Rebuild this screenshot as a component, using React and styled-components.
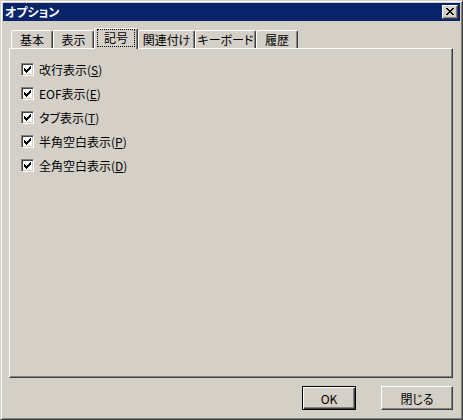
import React from "react";
import styled, { createGlobalStyle } from "styled-components";

const Global = createGlobalStyle`
  html, body { margin: 0; padding: 0; background: #d4d0c8; }
  body {
    font-family: "Noto Sans CJK JP", "Noto Sans", sans-serif;
    font-size: 12px;
    font-feature-settings: "palt";
    color: #000;
  }
  * { box-sizing: border-box; }
`;

const Window = styled.div`
  width: 463px;
  height: 420px;
  display: flex;
  flex-direction: column;
  background: #d4d0c8;
  border: 1px solid;
  border-color: #d4d0c8 #404040 #404040 #d4d0c8;
  box-shadow: inset 1px 1px #fff, inset -1px -1px #808080;
  padding: 2px;
`;

const TitleBar = styled.div`
  height: 18px;
  flex: none;
  display: flex;
  align-items: center;
  justify-content: space-between;
  background: #0a246a;
  color: #fff;
  font-weight: bold;
  font-size: 12px;
  padding: 0 2px 0 2px;
`;

const TitleText = styled.span`
  line-height: 18px;
`;

const CloseButton = styled.div`
  width: 16px;
  height: 14px;
  display: flex;
  align-items: center;
  justify-content: center;
  background: #d4d0c8;
  border: 1px solid;
  border-color: #fff #404040 #404040 #fff;
  box-shadow: inset -1px -1px #808080;
  padding: 0 1px 1px 0;
  svg { display: block; }
`;

const Body = styled.div`
  flex: 1;
  display: flex;
  flex-direction: column;
  padding: 7px 7px 0 6px;
`;

const TabStrip = styled.div`
  height: 20px;
  flex: none;
  display: flex;
  align-items: flex-end;
  padding-left: 2px;
`;

const Tab = styled.div`
  width: ${(p) => p.$w}px;
  height: ${(p) => (p.$active ? 21 : 18)}px;
  margin-bottom: ${(p) => (p.$active ? -1 : 0)}px;
  position: relative;
  z-index: ${(p) => (p.$active ? 1 : 0)};
  display: flex;
  align-items: stretch;
  justify-content: center;
  background: #d4d0c8;
  border-top: 1px solid #fff;
  border-left: 1px solid #fff;
  border-right: 1px solid #404040;
  border-radius: 2px 2px 0 0;
  box-shadow: inset -1px 0 #808080;
  padding: ${(p) => (p.$active ? "0 2px 2px 2px" : "0 2px")};
  white-space: nowrap;
`;

const TabLabel = styled.span`
  flex: 1;
  display: flex;
  align-items: center;
  justify-content: center;
  line-height: 12px;
  border: 1px dotted ${(p) => (p.$focus ? "#000" : "transparent")};
`;

const Panel = styled.div`
  flex: 1;
  display: flex;
  flex-direction: column;
  gap: 11px;
  border: 1px solid;
  border-color: #fff #404040 #404040 #fff;
  box-shadow: inset -1px -1px #808080;
  padding: 14px 11px;
`;

const Row = styled.label`
  height: 13px;
  display: flex;
  align-items: center;
  gap: 5px;
  line-height: 13px;
`;

const CheckBox = styled.span`
  width: 13px;
  height: 13px;
  flex: none;
  display: flex;
  align-items: center;
  justify-content: center;
  background: #fff;
  border: 1px solid;
  border-color: #808080 #fff #fff #808080;
  box-shadow: inset 1px 1px #404040, inset -1px -1px #d4d0c8;
  svg { display: block; }
`;

const Footer = styled.div`
  flex: none;
  display: flex;
  justify-content: flex-end;
  gap: 25px;
  padding: 8px 7px 7px 0;
`;

const Button = styled.div`
  width: ${(p) => p.$w}px;
  height: 24px;
  display: flex;
  align-items: center;
  justify-content: center;
  background: #d4d0c8;
  border: 1px solid;
  border-color: ${(p) => (p.$default ? "#000" : "#fff #404040 #404040 #fff")};
  box-shadow: ${(p) =>
    p.$default
      ? "inset 1px 1px #fff, inset -1px -1px #404040, inset -2px -2px #808080"
      : "inset -1px -1px #808080"};
  font-size: 12px;
`;

const Check = () => (
  <svg width="7" height="7" viewBox="0 0 7 7" shapeRendering="crispEdges">
    <path
      fill="#000"
      d="M6 0h1v1H6z M5 1h2v1H5z M0 2h1v1H0z M4 2h3v1H4z M0 3h2v1H0z M3 3h3v1H3z M0 4h5v1H0z M1 5h3v1H1z M2 6h1v1H2z"
    />
  </svg>
);

const CloseGlyph = () => (
  <svg width="8" height="7" viewBox="0 0 8 7" shapeRendering="crispEdges">
    <path
      fill="#000"
      d="M0 0h2v1H0z M6 0h2v1H6z M1 1h2v1H1z M5 1h2v1H5z M2 2h4v1H2z M3 3h2v1H3z M2 4h4v1H2z M1 5h2v1H1z M5 5h2v1H5z M0 6h2v1H0z M6 6h2v1H6z"
    />
  </svg>
);

const tabs = [
  { label: "基本", w: 42 },
  { label: "表示", w: 41 },
  { label: "記号", w: 44, active: true },
  { label: "関連付け", w: 57 },
  { label: "キーボード", w: 61 },
  { label: "履歴", w: 42 },
];

const options = [
  { text: "改行表示", key: "S" },
  { text: "EOF表示", key: "E" },
  { text: "タブ表示", key: "T" },
  { text: "半角空白表示", key: "P" },
  { text: "全角空白表示", key: "D" },
];

export default function App() {
  return (
    <>
      <Global />
      <Window>
        <TitleBar>
          <TitleText>オプション</TitleText>
          <CloseButton>
            <CloseGlyph />
          </CloseButton>
        </TitleBar>
        <Body>
          <TabStrip>
            {tabs.map((t) => (
              <Tab key={t.label} $w={t.w} $active={t.active}>
                <TabLabel $focus={t.active}>{t.label}</TabLabel>
              </Tab>
            ))}
          </TabStrip>
          <Panel>
            {options.map((o) => (
              <Row key={o.key}>
                <CheckBox>
                  <Check />
                </CheckBox>
                <span>
                  {o.text}(<u>{o.key}</u>)
                </span>
              </Row>
            ))}
          </Panel>
        </Body>
        <Footer>
          <Button $w={54} $default>
            OK
          </Button>
          <Button $w={72}>閉じる</Button>
        </Footer>
      </Window>
    </>
  );
}
